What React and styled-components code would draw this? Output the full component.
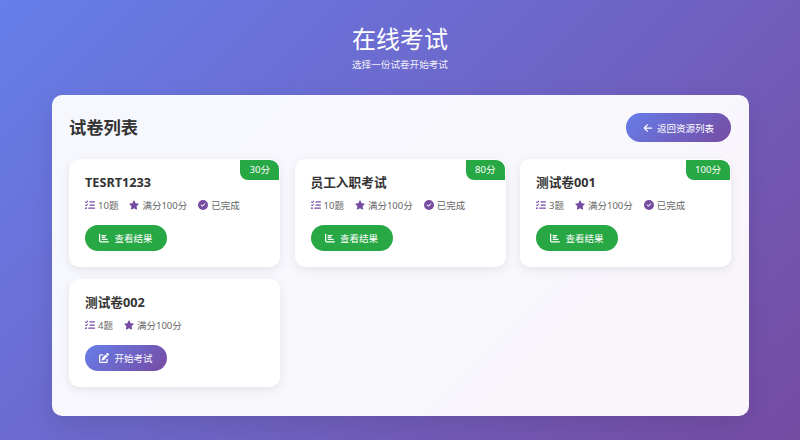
import React from 'react';
import styled, { createGlobalStyle } from 'styled-components';
import { FaListCheck, FaStar, FaCircleCheck, FaChartBar, FaArrowLeft, FaPenToSquare } from 'react-icons/fa6';

const gradient = 'linear-gradient(135deg, #667eea 0%, #764ba2 100%)';

const exams = [
	{ title: 'TESRT1233', count: 10, score: 30 },
	{ title: '员工入职考试', count: 10, score: 80 },
	{ title: '测试卷001', count: 3, score: 100 },
	{ title: '测试卷002', count: 4 },
];

const App = () => (
	<Page>
		<GlobalStyle />
		<Header>
			<Heading>在线考试</Heading>
			<Subheading>选择一份试卷开始考试</Subheading>
		</Header>
		<Panel>
			<PanelHead>
				<PanelTitle>试卷列表</PanelTitle>
				<BackButton>
					<FaArrowLeft size={10} />
					返回资源列表
				</BackButton>
			</PanelHead>
			<CardGrid>
				{exams.map(({ title, count, score }) => {
					const done = score !== undefined;
					return (
						<Card key={title}>
							{done && <ScoreBadge>{score}分</ScoreBadge>}
							<CardTitle>{title}</CardTitle>
							<Meta>
								<MetaItem><FaListCheck size={10} />{count}题</MetaItem>
								<MetaItem><FaStar size={10} />满分100分</MetaItem>
								{done && <MetaItem><FaCircleCheck size={10} />已完成</MetaItem>}
							</Meta>
							<ActionButton $done={done}>
								{done ? <FaChartBar size={10} /> : <FaPenToSquare size={10} />}
								{done ? '查看结果' : '开始考试'}
							</ActionButton>
						</Card>
					);
				})}
			</CardGrid>
		</Panel>
	</Page>
);

const GlobalStyle = createGlobalStyle`
  html, body {
    margin: 0;
    padding: 0;
  }
  body {
    font-family: "Noto Sans", "Noto Sans CJK SC", sans-serif;
  }
`;

const Page = styled.div`
  box-sizing: border-box;
  width: 800px;
  height: 440px;
  padding: 21px 0 24px;
  background: ${gradient};
  overflow: hidden;
`;

const Header = styled.header`
  height: 74px;
  text-align: center;
  color: #fff;
`;

const Heading = styled.h1`
  margin: 0;
  font-size: 24px;
  line-height: 35px;
  font-weight: 400;
`;

const Subheading = styled.p`
  margin: 1px 0 0;
  font-size: 9.6px;
  line-height: 15px;
  opacity: 0.9;
`;

const Panel = styled.main`
  box-sizing: border-box;
  height: 321px;
  margin: 0 51px 0 52px;
  padding: 18px 18px 0 17px;
  background: rgba(255, 255, 255, 0.95);
  border-radius: 10px;
  box-shadow: 0 8px 24px rgba(0, 0, 0, 0.1);
`;

const PanelHead = styled.div`
  display: flex;
  align-items: center;
  justify-content: space-between;
  height: 29px;
  margin-bottom: 17px;
`;

const PanelTitle = styled.h2`
  margin: 0 0 2px;
  font-size: 17.3px;
  font-weight: 700;
  color: #333;
`;

const BackButton = styled.button`
  display: flex;
  align-items: center;
  justify-content: center;
  gap: 4px;
  width: 105px;
  height: 29px;
  padding: 0;
  border: none;
  border-radius: 15px;
  background: ${gradient};
  color: #fff;
  font: inherit;
  font-size: 9.5px;
`;

const CardGrid = styled.div`
  display: grid;
  grid-template-columns: repeat(3, 211px);
  grid-auto-rows: 108px;
  column-gap: 14.5px;
  row-gap: 12px;
`;

const Card = styled.article`
  position: relative;
  box-sizing: border-box;
  padding: 13px 15px;
  background: #fff;
  border: 1px solid rgba(255, 255, 255, 0.9);
  border-radius: 10px;
  box-shadow: 0 3px 10px rgba(0, 0, 0, 0.08);
  overflow: hidden;
`;

const ScoreBadge = styled.span`
  position: absolute;
  top: 0;
  right: 0;
  padding: 0 9px;
  height: 20px;
  background: #28a745;
  border-bottom-left-radius: 8px;
  color: #fff;
  font-size: 9.6px;
  line-height: 20px;
`;

const CardTitle = styled.h3`
  margin: 0;
  font-size: 12.7px;
  line-height: 19px;
  font-weight: 700;
  color: #333;
`;

const Meta = styled.div`
  display: flex;
  gap: 11px;
  margin-top: 5px;
`;

const MetaItem = styled.span`
  display: flex;
  align-items: center;
  gap: 3px;
  height: 15px;
  font-size: 9.5px;
  color: #666;

  & > svg {
    color: #764ba2;
  }
`;

const ActionButton = styled.button`
  display: flex;
  align-items: center;
  justify-content: center;
  gap: 5px;
  width: 82px;
  height: 26px;
  margin-top: 13px;
  padding: 0;
  border: none;
  border-radius: 13px;
  background: ${({ $done }) => ($done ? '#28a745' : gradient)};
  color: #fff;
  font: inherit;
  font-size: 9.5px;
`;

export default App;
